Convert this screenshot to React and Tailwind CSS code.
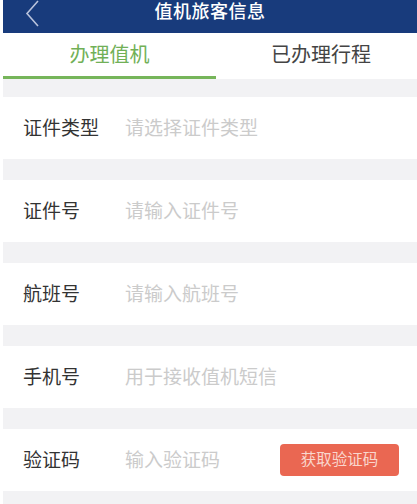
import React from "react";

const rows = [
  { label: "证件类型", placeholder: "请选择证件类型" },
  { label: "证件号", placeholder: "请输入证件号" },
  { label: "航班号", placeholder: "请输入航班号" },
  { label: "手机号", placeholder: "用于接收值机短信" },
];

const Row = ({ label, placeholder, children }) => (
  <div className="flex items-center h-[62px] bg-white pl-[20px] pr-[18px]">
    <span className="w-[102px] text-[19px] text-[#333333] leading-none">{label}</span>
    <span className="flex-1 text-[19px] text-[#cbcbcb] leading-none">{placeholder}</span>
    {children}
  </div>
);

const App = () => {
  return (
    <div
      className="w-[417px] h-[504px] overflow-hidden bg-white pl-[3px]"
      style={{ fontFamily: '"Noto Sans", "Noto Sans CJK SC", sans-serif' }}
    >
      <div className="relative h-[33px] bg-[#183b7c] flex justify-center">
        <svg
          className="absolute left-[20px] top-0"
          width="20"
          height="28"
          viewBox="0 0 20 28"
          fill="none"
        >
          <path d="M15 1 L4 13.5 L15 26" stroke="#b9c3dc" strokeWidth="1.6" />
        </svg>
        <span className="text-white text-[18px] leading-none mt-[2px] font-medium tracking-[0.5px]">
          值机旅客信息
        </span>
      </div>

      <div className="flex h-[46px] bg-white">
        <div className="w-[213px] flex flex-col">
          <div className="flex-1 flex items-center justify-center text-[20px] text-[#71b057]">
            办理值机
          </div>
          <div className="h-[3px] bg-[#76b55a]" />
        </div>
        <div className="flex-1 flex items-center justify-center pl-[9px] pb-[3px] text-[20px] text-[#444444]">
          已办理行程
        </div>
      </div>

      <div className="bg-[#f2f2f4] pt-[18px] flex flex-col gap-[21px] h-full">
        {rows.map((r) => (
          <Row key={r.label} label={r.label} placeholder={r.placeholder} />
        ))}
        <Row label="验证码" placeholder="输入验证码">
          <button className="w-[119px] h-[32px] rounded-[4px] bg-[#ea6752] text-[#f9d6cd] text-[15.5px] leading-none">
            获取验证码
          </button>
        </Row>
      </div>
    </div>
  );
};

export default App;
